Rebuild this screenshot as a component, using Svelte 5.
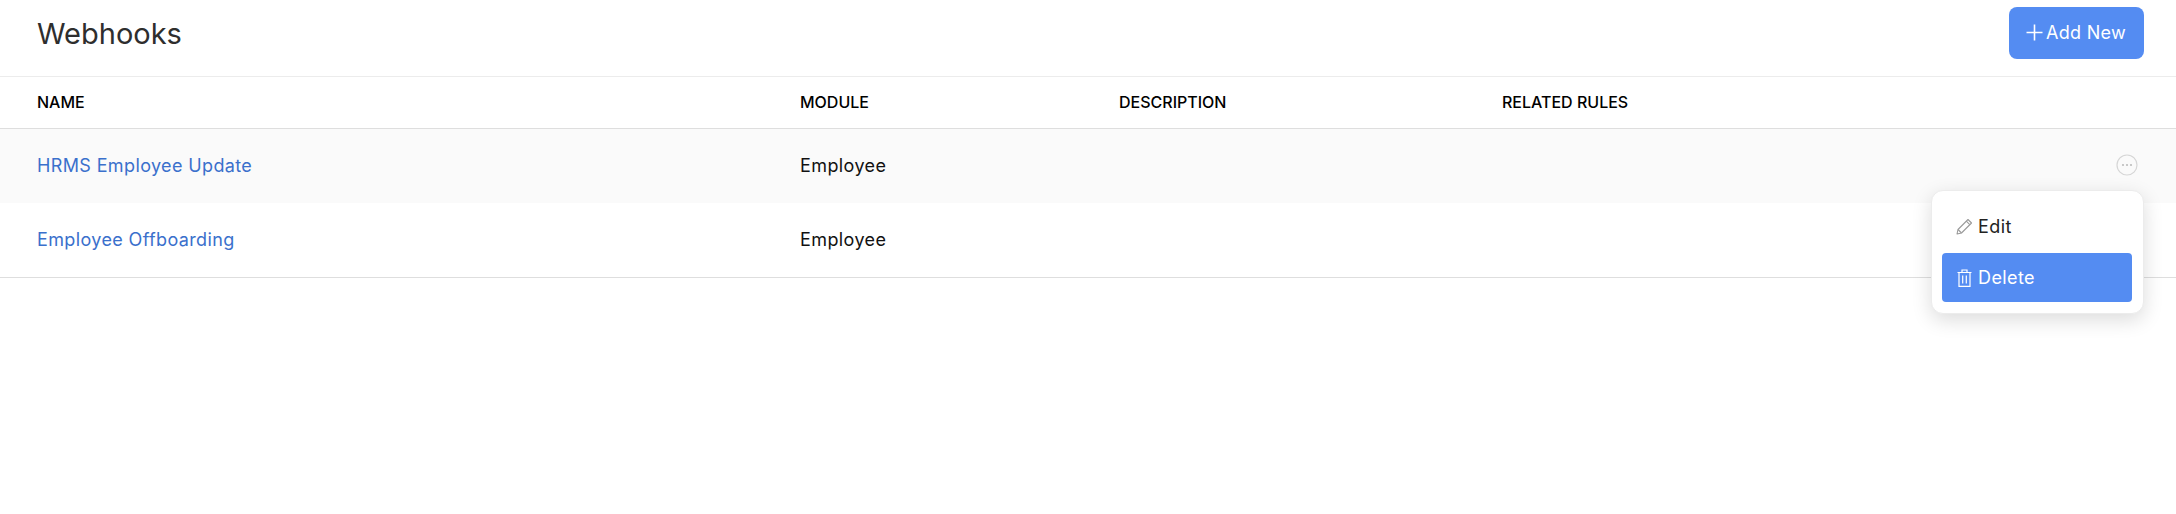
<script lang="ts">
	type Webhook = { name: string; module: string; description: string; rules: string };

	const webhooks: Webhook[] = [
		{ name: "HRMS Employee Update", module: "Employee", description: "", rules: "" },
		{ name: "Employee Offboarding", module: "Employee", description: "", rules: "" }
	];
</script>

<main class="page">
	<header class="top">
		<h1>Webhooks</h1>
		<button class="add">
			<svg width="17" height="17" viewBox="0 0 17 17" fill="none" stroke="currentColor" stroke-width="1.6">
				<path d="M8.5 0.5v16M0.5 8.5h16" />
			</svg>
			Add New
		</button>
	</header>

	<div class="row head">
		<div>NAME</div>
		<div>MODULE</div>
		<div>DESCRIPTION</div>
		<div>RELATED RULES</div>
	</div>

	{#each webhooks as hook, i}
		<div class="row body" class:hover={i === 0} class:last={i === webhooks.length - 1}>
			<div class="name">{hook.name}</div>
			<div>{hook.module}</div>
			<div>{hook.description}</div>
			<div>{hook.rules}</div>
			{#if i === 0}
				<span class="more" aria-label="More">
					<svg width="22" height="22" viewBox="0 0 22 22" fill="none">
						<circle cx="11" cy="11" r="10" stroke="#d6d6d6" stroke-width="1.2" />
						<circle cx="7" cy="11" r="1.1" fill="#bdbdbd" />
						<circle cx="11" cy="11" r="1.1" fill="#bdbdbd" />
						<circle cx="15" cy="11" r="1.1" fill="#bdbdbd" />
					</svg>
				</span>
				<div class="menu">
					<div class="item">
						<svg width="17" height="17" viewBox="0 0 17 17" fill="none" stroke="#9a9a9a" stroke-width="1.1" stroke-linejoin="round">
							<path d="M1 16l1-4.5L12 1.5l3.5 3.5-10 10z" />
							<path d="M10.3 3.2l3.5 3.5M2 11.5l3.5 3.5" />
						</svg>
						Edit
					</div>
					<div class="item active">
						<svg width="17" height="18" viewBox="-0.5 0 17 18" fill="none" stroke="currentColor" stroke-width="1.2">
							<path d="M1 3.5h14M5.5 3.5V1h5v2.5M2.5 3.5v13.8h11V3.5M6.2 6.5v8M9.8 6.5v8" />
						</svg>
						Delete
					</div>
				</div>
			{/if}
		</div>
	{/each}
</main>

<style>
	:global(body) {
		margin: 0;
		font-family: "Inter", "Liberation Sans", sans-serif;
		background: #fff;
		color: #000;
	}

	.page {
		height: 514px;
		overflow: hidden;
	}

	.top {
		display: flex;
		align-items: center;
		justify-content: space-between;
		box-sizing: border-box;
		height: 77px;
		padding: 0 32px 11px 37px;
		border-bottom: 1px solid #ececec;
	}

	h1 {
		margin: 0;
		font-size: 29px;
		font-weight: 400;
		color: #2e2e2e;
		position: relative;
		top: 1px;
	}

	.add {
		display: flex;
		align-items: center;
		gap: 3px;
		box-sizing: border-box;
		width: 135px;
		height: 52px;
		padding: 0 0 0 17px;
		border: none;
		border-radius: 8px;
		background: #548cf2;
		color: #fff;
		font: 400 18px "Inter", sans-serif;
		letter-spacing: 0.3px;
	}

	.row {
		display: grid;
		grid-template-columns: 763px 319px 383px 1fr;
		align-items: center;
		position: relative;
		box-sizing: border-box;
		padding-left: 37px;
	}

	.head {
		height: 52px;
		padding-bottom: 1px;
		font-size: 16px;
		font-weight: 500;
		border-bottom: 1px solid #dedede;
	}

	.body {
		height: 74px;
		padding-bottom: 1px;
		font-size: 18px;
		letter-spacing: 0.4px;
		color: #111;
	}

	.body.hover {
		background: #fafafa;
	}

	.body.last {
		height: 75px;
		padding-bottom: 2px;
		border-bottom: 1px solid #dedede;
	}

	.name {
		color: #3a70cc;
		letter-spacing: 0.37px;
	}

	.more {
		position: absolute;
		left: 2116px;
		top: 25px;
		display: flex;
	}

	.menu {
		position: absolute;
		z-index: 2;
		left: 1931px;
		top: 61px;
		box-sizing: border-box;
		width: 213px;
		height: 124px;
		padding: 11px 11px 11px 10px;
		display: flex;
		flex-direction: column;
		gap: 2px;
		background: #fff;
		border: 1px solid #ececec;
		border-radius: 12px;
		box-shadow: 0 6px 20px rgba(0, 0, 0, 0.14);
	}

	.item {
		display: flex;
		align-items: center;
		gap: 5px;
		height: 49px;
		padding-left: 14px;
		font-size: 18px;
		color: #222;
		border-radius: 4px;
	}

	.item.active {
		background: #548cf2;
		color: #fff;
	}
</style>
